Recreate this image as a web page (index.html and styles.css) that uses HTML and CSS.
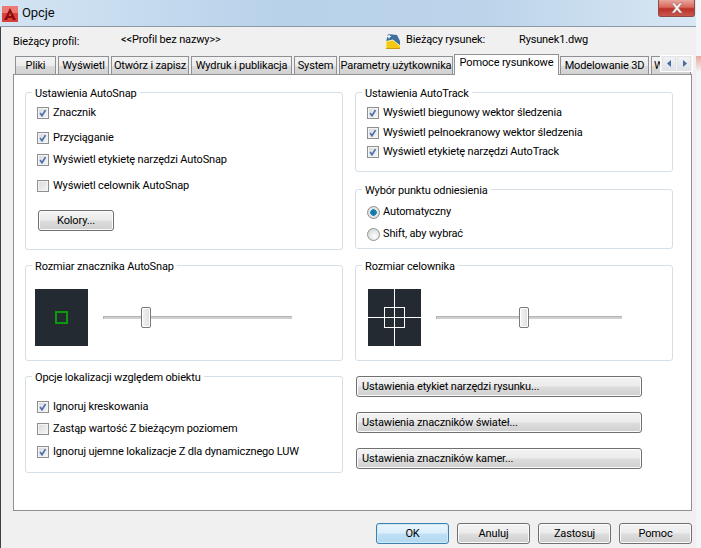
FILE: index.html
```html
<!DOCTYPE html>
<html lang="pl">
<head>
<meta charset="utf-8">
<title>Opcje</title>
<link rel="stylesheet" href="styles.css">
</head>
<body>
<svg class="defs" width="0" height="0" aria-hidden="true">
  <symbol id="tick" viewBox="0 0 12 12"><path d="M2.500 6 4.800 9.300 9 2.500" fill="none" stroke="#4a6fb0" stroke-width="2"/></symbol>
</svg>
<div class="stain"></div>
<div class="window">
  <header class="titlebar">
    <svg class="logo" viewBox="0 0 16 16"><rect width="16" height="16" fill="#d8423c"/><rect width="16" height="7" fill="#ea7a72"/><path d="M8 2 2 14h3l1-2h4l1 2h3z" fill="#8e0d0d"/><path d="M8 6.500 6.800 10h2.400z" fill="#e25a52"/></svg>
    <span class="title-text">Opcje</span>
    <div class="close"><svg viewBox="0 0 14 12" width="14" height="12"><path d="M1.500 1 4.500 1 7 4 9.500 1 12.500 1 8.600 6 12.500 11 9.500 11 7 8 4.500 11 1.500 11 5.400 6z" fill="#f4eeee" stroke="#8a6a6a" stroke-width=".5"/></svg></div>
  </header>

  <div class="profile">
    <span class="p-label">Bieżący profil:</span>
    <span class="p-name">&lt;&lt;Profil bez nazwy&gt;&gt;</span>
    <svg class="dwg-icon" viewBox="0 0 16 16"><path d="M1 9 3 1l9 1 3 6v4z" fill="#3f6f9f"/><path d="M1 8.500 8 7l7 6v3H1z" fill="#f4c814"/><path d="M1 16V8.500L8 7l7 6" fill="none" stroke="#fff3b0"/><path d="M1 15.500h14" stroke="#c99a10"/><path d="M4 1l.8 1.700L6.500 3.500 4.800 4.300 4 6 3.200 4.300 1.500 3.500 3.200 2.700z" fill="#fff"/></svg>
    <span class="p-draw">Bieżący rysunek:</span>
    <span class="p-file">Rysunek1.dwg</span>
  </div>

  <nav class="tabs">
    <div class="tab t1">Pliki</div>
    <div class="tab t2">Wyświetl</div>
    <div class="tab t3">Otwórz i zapisz</div>
    <div class="tab t4">Wydruk i publikacja</div>
    <div class="tab t5">System</div>
    <div class="tab t6">Parametry użytkownika</div>
    <div class="tab active">Pomoce rysunkowe</div>
    <div class="tab t8">Modelowanie 3D</div>
    <div class="tab t9">W</div>
    <div class="scroller">
      <div class="scroll-btn"><svg viewBox="0 0 5 7" width="5" height="7"><path d="M4 0v7L0 3.500z" fill="#4a6a9c"/></svg></div>
      <div class="scroll-btn"><svg viewBox="0 0 5 7" width="5" height="7"><path d="M1 0v7l4-3.500z" fill="#4a6a9c"/></svg></div>
    </div>
  </nav>

  <main class="panel">
    <div class="col">
      <section class="group g-snap">
        <div class="legend">Ustawienia AutoSnap</div>
        <label class="row m4"><span class="cb"><svg><use href="#tick"/></svg></span>Znacznik</label>
        <label class="row m9"><span class="cb"><svg><use href="#tick"/></svg></span>Przyciąganie</label>
        <label class="row m6"><span class="cb"><svg><use href="#tick"/></svg></span>Wyświetl etykietę narzędzi AutoSnap</label>
        <label class="row m10"><span class="cb"></span>Wyświetl celownik AutoSnap</label>
        <button class="btn colors">Kolory...</button>
      </section>

      <section class="group g-size">
        <div class="legend">Rozmiar znacznika AutoSnap</div>
        <div class="size-body pad-a">
          <div class="preview"><span class="marker"></span></div>
          <div class="slider sl-a"><span class="thumb"></span></div>
        </div>
      </section>

      <section class="group g-opts">
        <div class="legend">Opcje lokalizacji względem obiektu</div>
        <label class="row m14"><span class="cb"><svg><use href="#tick"/></svg></span>Ignoruj kreskowania</label>
        <label class="row m6"><span class="cb"></span>Zastąp wartość Z bieżącym poziomem</label>
        <label class="row m7"><span class="cb"><svg><use href="#tick"/></svg></span>Ignoruj ujemne lokalizacje Z dla dynamicznego LUW</label>
      </section>
    </div>

    <div class="col">
      <section class="group g-track">
        <div class="legend">Ustawienia AutoTrack</div>
        <label class="row m4"><span class="cb"><svg><use href="#tick"/></svg></span>Wyświetl biegunowy wektor śledzenia</label>
        <label class="row m4"><span class="cb"><svg><use href="#tick"/></svg></span>Wyświetl pełnoekranowy wektor śledzenia</label>
        <label class="row m3"><span class="cb"><svg><use href="#tick"/></svg></span>Wyświetl etykietę narzędzi AutoTrack</label>
      </section>

      <section class="group g-pick">
        <div class="legend">Wybór punktu odniesienia</div>
        <label class="row m6"><span class="radio on"></span>Automatyczny</label>
        <label class="row m6"><span class="radio"></span>Shift, aby wybrać</label>
      </section>

      <section class="group g-size">
        <div class="legend">Rozmiar celownika</div>
        <div class="size-body pad-b">
          <div class="preview">
            <svg viewBox="0 0 53 57" width="53" height="57"><path d="M26.500 0V57M0 28.500H53" stroke="#fff" fill="none"/><rect x="16.500" y="18.500" width="20" height="20" fill="none" stroke="#fff"/></svg>
          </div>
          <div class="slider sl-b"><span class="thumb"></span></div>
        </div>
      </section>

      <div class="actions">
        <button class="btn wide">Ustawienia etykiet narzędzi rysunku...</button>
        <button class="btn wide">Ustawienia znaczników świateł...</button>
        <button class="btn wide">Ustawienia znaczników kamer...</button>
      </div>
    </div>
  </main>

  <footer class="footer">
    <button class="btn foot primary">OK</button>
    <button class="btn foot">Anuluj</button>
    <button class="btn foot">Zastosuj</button>
    <button class="btn foot">Pomoc</button>
  </footer>
</div>
</body>
</html>
```
FILE: styles.css
```css
* { box-sizing: border-box; }
html, body { margin: 0; height: 100%; overflow: hidden; background: #f3f6f9; }
body, button { font: 11px/16px Roboto, "Noto Sans", sans-serif; letter-spacing: -.15px; color: #000; }
.defs { position: absolute; }
.stain { position: absolute; left: 696px; top: 56px; width: 5px; height: 16px; background: linear-gradient(#e8a79f, #f3f6f9); }

.window { width: 696px; height: 548px; background: #f0f0f0; display: flex; flex-direction: column; border-left: 1px solid #3b414a; position: relative; }

.titlebar { height: 27px; margin-left: -1px; background: linear-gradient(90deg, #d3e4f3 0, #b8d2ea 40%, #bcd4ea 70%, #d8e7f4 100%); border-bottom: 1px solid #8d99a6; display: flex; align-items: center; padding-left: 2px; flex: none; position: relative; }
.logo { width: 16px; height: 16px; margin-top: 1px; }
.title-text { font-size: 13px; margin-left: 4px; letter-spacing: -.1px; color: #0c0c0c; }
.close { position: absolute; right: 1px; top: 0; width: 37px; height: 17px; background: linear-gradient(#e9a69c, #d9665b 45%, #bb3027 55%, #c9584e); border: 1px solid #8f4b45; border-top: 0; border-radius: 0 0 3px 3px; display: flex; align-items: center; justify-content: center; }

.profile { height: 27px; flex: none; display: flex; position: relative; }
.p-label { margin: 7px 0 0 12px; width: 108px; }
.p-name { margin-top: 5px; width: 264px; }
.dwg-icon { width: 16px; height: 16px; margin-top: 6px; }
.p-draw { margin: 5px 0 0 5px; width: 113px; }
.p-file { margin-top: 5px; }

.tabs { height: 21px; margin-bottom: -1px; flex: none; display: flex; align-items: flex-start; gap: 2px; margin-left: 14px; width: 681px; position: relative; z-index: 1; overflow: hidden; }
.tab { height: 18px; margin-top: 2px; line-height: 17px; background: linear-gradient(#f3f3f3 0, #ececec 50%, #dadada 55%, #d2d2d2 100%); border: 1px solid #8e9094; border-bottom: 0; text-align: center; white-space: nowrap; flex: none; overflow: hidden; }
.t1 { width: 41px; }
.t2 { width: 51px; }
.t3 { width: 78px; }
.t4 { width: 101px; }
.t5 { width: 43px; }
.t6 { width: 114px; margin-right: -1px; }
.active { width: 105px; height: 21px; margin-top: 0; background: #fff; line-height: 15px; margin-right: -1px; }
.t8 { width: 89px; }
.t9 { width: 40px; text-align: left; padding-left: 2px; }
.scroller { position: absolute; right: 3px; top: 1px; width: 33px; height: 17px; background: #f0f0f0; display: flex; gap: 1px; padding: 0 1px; border: 1px solid #fff; }
.scroll-btn { flex: 1; background: linear-gradient(#f0f2f6, #dfe2e8); border: 1px solid #e4e4e4; display: flex; align-items: center; justify-content: center; }

.panel { width: 679px; height: 437px; margin-left: 12px; flex: none; background: #fff; border: 1px solid #8e9094; padding: 17px 0 0 11px; display: flex; gap: 12px; }
.col { width: 318px; display: flex; flex-direction: column; }

.group { border: 1px solid #d5dfe5; border-radius: 3px; flex: none; }
.legend { width: fit-content; height: 16px; margin: -8px 0 0 6px; padding: 0 3px; background: #fff; line-height: 18px; white-space: nowrap; }
.g-snap { height: 158px; margin-bottom: 15px; }
.g-track { height: 80px; margin-bottom: 17px; }
.g-pick { height: 60px; margin-bottom: 16px; }
.g-size { height: 96px; margin-bottom: 15px; }
.g-opts { height: 97px; }

.row { display: flex; align-items: center; height: 16px; margin-left: 11px; white-space: nowrap; }
.m3 { margin-top: 3px; }
.m4 { margin-top: 4px; }
.m6 { margin-top: 6px; }
.m7 { margin-top: 7px; }
.m9 { margin-top: 9px; }
.m10 { margin-top: 10px; }
.m14 { margin-top: 14px; }

.cb { width: 12px; height: 12px; margin-right: 4px; flex: none; border: 1px solid #8e8f8f; background: linear-gradient(135deg, #d8d9db, #f6f6f6); box-shadow: inset 0 0 0 1px #f4f4f4; }
.cb svg { display: block; width: 10px; height: 10px; }
.radio { width: 13px; height: 13px; margin-right: 3px; flex: none; border-radius: 50%; border: 1px solid #8e8f8f; background: radial-gradient(circle at 60% 65%, #fdfdfd, #cfd0d2); }
.radio.on { background: radial-gradient(circle, #0f6f9f 0, #1c85b4 3px, #e9e9e9 3.600px, #cfd0d2 100%); }

.btn { display: block; padding: 0; border: 1px solid #707070; border-radius: 3px; background: linear-gradient(#f4f4f4 0, #ebebeb 48%, #dddddd 52%, #cfcfcf 100%); box-shadow: inset 0 0 0 1px #fbfbfb; text-align: center; }
.colors { width: 76px; height: 21px; margin: 16px 0 0 12px; }
.wide { width: 286px; height: 21px; text-align: left; padding-left: 5px; margin-left: 1px; }
.actions { display: flex; flex-direction: column; gap: 15px; }
.foot { width: 73px; height: 21px; }
.primary { border-color: #3c7fb1; background: linear-gradient(#e9f5fc 0, #dceefa 48%, #bfe0f5 52%, #b3d8f0 100%); box-shadow: inset 0 0 0 1px #cfeaf9; }

.size-body { display: flex; align-items: center; margin-top: 15px; }
.pad-a { padding-left: 9px; }
.pad-b { padding-left: 12px; }
.preview { width: 53px; height: 57px; background: #232a32; display: flex; align-items: center; justify-content: center; flex: none; }
.preview svg { display: block; }
.marker { width: 13px; height: 13px; border: 2px solid #0c9a0c; }
.slider { height: 3px; margin-left: 15px; background: #cfcfcf; border-top: 1px solid #b4b4b4; border-left: 1px solid #b4b4b4; position: relative; }
.sl-a { width: 189px; }
.sl-b { width: 186px; }
.thumb { position: absolute; top: -10px; width: 10px; height: 21px; border: 1px solid #7a7a7a; border-radius: 2px; background: linear-gradient(90deg, #f5f5f5, #dedede); box-shadow: inset 0 0 0 1px #fff; }
.sl-a .thumb { left: 37px; }
.sl-b .thumb { left: 82px; }

.footer { display: flex; justify-content: flex-end; gap: 8px; padding-right: 4px; margin-top: 12px; }
```
